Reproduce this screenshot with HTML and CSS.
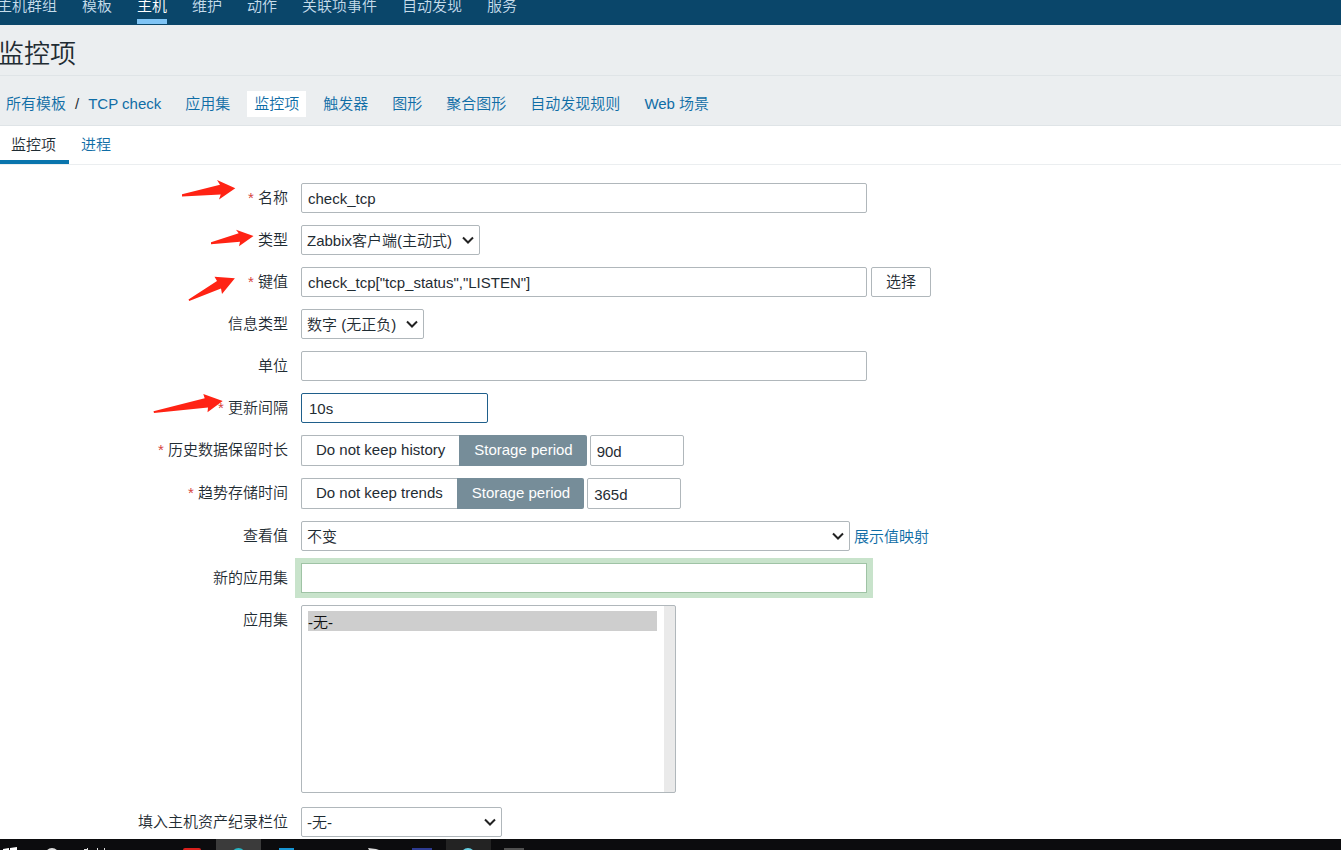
FILE: index.html
```html
<!DOCTYPE html>
<html lang="zh-CN">
<head>
<meta charset="utf-8">
<title>监控项</title>
<link rel="stylesheet" href="styles.css">
</head>
<body>
<nav class="topnav">
  <a href="#">主机群组</a>
  <a href="#">模板</a>
  <a href="#" class="current">主机</a>
  <a href="#">维护</a>
  <a href="#">动作</a>
  <a href="#">关联项事件</a>
  <a href="#">自动发现</a>
  <a href="#">服务</a>
</nav>
<header class="title-bar"><h1>监控项</h1></header>
<nav class="crumbs">
  <div class="path"><a href="#">所有模板</a><span>/</span><a href="#">TCP check</a></div>
  <a href="#">应用集</a>
  <a href="#" class="current">监控项</a>
  <a href="#">触发器</a>
  <a href="#">图形</a>
  <a href="#">聚合图形</a>
  <a href="#">自动发现规则</a>
  <a href="#">Web 场景</a>
</nav>
<nav class="tabs">
  <a href="#" class="current">监控项</a>
  <a href="#">进程</a>
</nav>
<main>
  <form class="form">
    <label class="label required" for="name">名称</label>
    <div class="field"><input class="wide" id="name" type="text" value="check_tcp"></div>

    <label class="label" for="type">类型</label>
    <div class="field"><select class="type" id="type"><option>Zabbix客户端(主动式)</option></select></div>

    <label class="label required" for="key">键值</label>
    <div class="field"><input class="wide" id="key" type="text" value="check_tcp[&quot;tcp_status&quot;,&quot;LISTEN&quot;]"><button type="button">选择</button></div>

    <label class="label" for="info">信息类型</label>
    <div class="field"><select class="info" id="info"><option>数字 (无正负)</option></select></div>

    <label class="label" for="units">单位</label>
    <div class="field"><input class="wide" id="units" type="text"></div>

    <label class="label required" for="delay">更新间隔</label>
    <div class="field"><input class="delay" id="delay" type="text" value="10s"></div>

    <label class="label required" for="history">历史数据保留时长</label>
    <div class="field storage">
      <div class="segments">
        <input type="radio" name="hist" id="hist-off"><label for="hist-off">Do not keep history</label>
        <input type="radio" name="hist" id="hist-on" checked><label for="hist-on">Storage period</label>
      </div>
      <input class="short" id="history" type="text" value="90d">
    </div>

    <label class="label required" for="trends">趋势存储时间</label>
    <div class="field storage">
      <div class="segments">
        <input type="radio" name="trend" id="trend-off"><label for="trend-off">Do not keep trends</label>
        <input type="radio" name="trend" id="trend-on" checked><label for="trend-on">Storage period</label>
      </div>
      <input class="short" id="trends" type="text" value="365d">
    </div>

    <label class="label" for="valuemap">查看值</label>
    <div class="field"><select class="valuemap" id="valuemap"><option>不变</option></select><a href="#">展示值映射</a></div>

    <label class="label" for="newapp">新的应用集</label>
    <div class="field"><input class="wide highlighted" id="newapp" type="text"></div>

    <label class="label" for="apps">应用集</label>
    <div class="field"><select class="apps" id="apps" multiple size="9"><option selected>-无-</option></select></div>

    <label class="label" for="inventory">填入主机资产纪录栏位</label>
    <div class="field"><select class="inventory" id="inventory"><option>-无-</option></select></div>
  </form>
  <svg class="arrows" width="300" height="320" viewBox="0 165 300 320" aria-hidden="true">
    <path d="M182 194.2 L220 184.7 L217 180 L235.3 188.3 L219 199.5 L220.7 194.5 L182 196.4Z"/>
    <path d="M211 242.2 L238.7 233.3 L236 229.7 L253.5 236 L239 246.2 L240 241.8 L211 244.2Z"/>
    <path d="M188.500 299.4 L217 281 L214.500 276.7 L234.9 278.2 L222 294 L221 288.4 L189.2 301Z"/>
    <path d="M153.500 411.2 L204.7 398.3 L203.3 394 L222.7 401 L207.5 412.2 L208 407.5 L154 413Z"/>
  </svg>
</main>
<footer class="taskbar">
  <svg width="560" height="11" viewBox="0 839 560 11" aria-hidden="true">
    <path fill="#3b3b3b" d="M216 839h45v11h-45z"/>
    <path fill="#232323" d="M446 839h45v11h-45z"/>
    <path fill="#fff" d="M3 850v-1l6-1v2zM10 850v-2l7-1v3z"/>
    <circle cx="52" cy="855" r="6" fill="none" stroke="#ddd" stroke-width="2"/>
    <path stroke="#ddd" d="M87.500 848v2M97.500 848v2M104.500 848v2M84 849.500h4"/>
    <path fill="#d9201c" d="M183 850q0-2 2-2h14q2 0 2 2z"/>
    <circle cx="238.500" cy="855" r="7" fill="#27b6c5"/>
    <path fill="#1795d3" d="M279 848h15v2h-15z"/>
    <path fill="#ddd" d="M368 848l8 1 3 1h-10z"/>
    <path fill="#2d3b92" d="M412 848h20v2h-20z"/>
    <circle cx="468" cy="855" r="7" fill="#65cfe3"/>
    <path fill="#505050" d="M504 848h20v2h-20z"/>
  </svg>
</footer>
</body>
</html>
```
FILE: styles.css
```css
* { box-sizing: border-box; }
body {
  margin: 0;
  background: #fff;
  color: #1f2c33;
  font: 350 15px/20px "Liberation Sans", "Noto Sans CJK SC", sans-serif;
}
a { color: #0f6da6; text-decoration: none; }

.topnav {
  display: flex;
  align-items: flex-end;
  gap: 25px;
  height: 25px;
  margin-left: -3px;
  padding-bottom: 1px;
  overflow: hidden;
  background: #0a466a;
}
.topnav a {
  padding-bottom: 3px;
  border-bottom: 5px solid transparent;
  color: #c5dcea;
  white-space: nowrap;
}
.topnav .current { border-color: #7fc4f5; color: #fff; }

.title-bar {
  height: 51px;
  margin-left: -2px;
  padding-top: 9px;
  background: #ebeef0;
  border-bottom: 1px solid #dfe4e7;
}
h1 { margin: 0; font-size: 26px; line-height: 40px; font-weight: 350; }

.crumbs {
  display: flex;
  align-items: center;
  gap: 10px;
  height: 50px;
  margin-left: -1px;
  padding-top: 6px;
  background: #ebeef0;
  border-bottom: 1px solid #dfe4e7;
}
.crumbs a { padding: 3px 7px; white-space: nowrap; }
.crumbs .current { background: #fff; }
.path { display: flex; align-items: center; }
.path span { padding: 0 2px; }

.tabs { display: flex; height: 39px; border-bottom: 1px solid #ebeef0; }
.tabs a { padding: 9px 12px 5px; border-bottom: 4px solid transparent; }
.tabs .current { padding-left: 11px; padding-right: 13px; border-color: #0a75ad; color: #1f2c33; }

main { position: relative; padding: 18px 0 2px; }
.form {
  display: grid;
  grid-template-columns: 288px 1fr;
  column-gap: 13px;
  row-gap: 12px;
}
.label { padding-top: 5px; text-align: right; }
.required::before { content: "* "; color: #d64540; }
.field { display: flex; align-items: center; gap: 4px; }
.field a { padding-top: 2px; }
input[type="text"], select, button {
  height: 30px;
  margin: 0;
  border: 1px solid #b0b7bb;
  border-radius: 2px;
  background: #fff;
  color: #1f2c33;
  font: inherit;
}
input[type="text"] { padding: 1px 6px 0; outline: none; }
.wide { width: 566px; }
input.delay { width: 187px; border-color: #1f5f8b; padding-left: 7px; }
select {
  padding: 2px 5px 0;
  appearance: none;
  background: #fff url("data:image/svg+xml,%3Csvg xmlns='http://www.w3.org/2000/svg' width='12' height='8'%3E%3Cpath d='M1 1.500L6 6.500L11 1.500' fill='none' stroke='%23222' stroke-width='2'/%3E%3C/svg%3E") no-repeat right 5px center;
}
.type { width: 179px; }
.info { width: 123px; }
.valuemap { width: 549px; }
.inventory { width: 201px; }
button { width: 60px; padding: 0; }

.storage { gap: 3px; }
.storage input[type="text"] { width: 94px; height: 31px; }
.segments { display: flex; }
.segments input { position: absolute; opacity: 0; pointer-events: none; }
.segments label {
  height: 31px;
  padding: 4px 14px 0;
  border: 1px solid #b0b7bb;
  border-right: 0;
  border-radius: 2px 0 0 2px;
}
.segments label:last-child { border: 0; padding: 5px 14px 0 15px; border-radius: 0 2px 2px 0; }
.segments input:checked + label { background: #768d99; color: #fff; }

input.highlighted {
  border-color: #9fc3a5;
  border-radius: 0;
  box-shadow: -1px 0 0 5px #c8e3cb, 1px 0 0 5px #c8e3cb;
}
.apps {
  width: 375px;
  height: 188px;
  margin-bottom: 2px;
  padding: 5px 18px 5px 6px;
  background: linear-gradient(#eaeaea, #eaeaea) no-repeat right / 11px 100%;
}
.apps option { height: 20px; padding: 0; font: inherit; line-height: 20px; }

.arrows { position: absolute; top: 0; left: 0; fill: #ff2314; pointer-events: none; }

.taskbar { height: 11px; overflow: hidden; background: #0c0c0e; }
.taskbar svg { display: block; }
```
